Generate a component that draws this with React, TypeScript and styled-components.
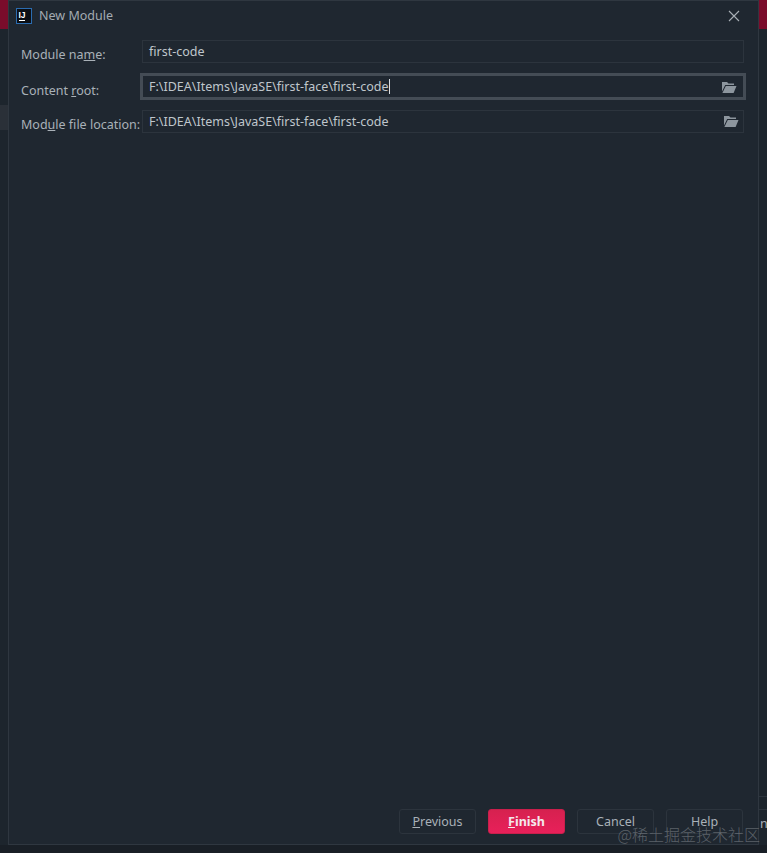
import styled, { createGlobalStyle } from "styled-components";

const GlobalStyle = createGlobalStyle`
  html, body {
    margin: 0;
    padding: 0;
    background: #191f26;
  }
  #root {
    height: 853px;
    overflow: hidden;
  }
`;

const Page = styled.div`
  position: relative;
  display: grid;
  grid-template-columns: 8px 751px 8px;
  height: 853px;
  font-family: "Noto Sans", "Open Sans", sans-serif;
  font-size: 12.5px;
  color: #bcc3c9;
`;

const SideStrip = styled.div`
  display: flex;
  flex-direction: column;
  height: 845px;
  overflow: hidden;
  background: #1d252d;
`;

const RedBlock = styled.div`
  height: 29px;
  flex: none;
  background: #7a0c2b;
`;

const Spacer = styled.div<{ $height?: number }>`
  flex: ${(p) => (p.$height ? "none" : "1")};
  height: ${(p) => (p.$height ? `${p.$height}px` : "auto")};
`;

const LightBlock = styled.div`
  height: 25px;
  flex: none;
  background: #2a3038;
`;

const StripLine = styled.div<{ $height: number }>`
  flex: none;
  height: ${(p) => p.$height}px;
  border-top: 1px solid #2d353e;
`;

const StripText = styled.div`
  flex: none;
  height: 36px;
  padding-top: 5px;
  box-sizing: border-box;
  border-top: 1px solid #2d353e;
  padding-left: 1px;
  white-space: nowrap;
  color: #a9b1b8;
`;

const Dialog = styled.div`
  display: flex;
  flex-direction: column;
  height: 845px;
  box-sizing: border-box;
  background: #1f2730;
  border: 1px solid #2f3740;
`;

const TitleBar = styled.div`
  display: flex;
  align-items: center;
  height: 29px;
  flex: none;
  padding: 0 18px 0 7px;
  gap: 7px;
`;

const TitleText = styled.span`
  flex: 1;
  color: #a3abb2;
  font-size: 12.5px;
`;

const CloseButton = styled.svg`
  width: 12px;
  height: 12px;
  stroke: #a9b0b6;
  stroke-width: 1.1;
  fill: none;
`;

const Form = styled.div`
  display: flex;
  flex-direction: column;
  flex: 1;
  gap: 9px;
  padding: 8px 14px 0 12px;
`;

const FormRow = styled.div`
  display: grid;
  grid-template-columns: 121px 1fr;
  align-items: center;
  height: 26px;
`;

const Label = styled.label`
  color: #a9b1b8;
  white-space: nowrap;
  padding-top: 7px;
`;

const Field = styled.div<{ $focused?: boolean }>`
  display: flex;
  align-items: center;
  justify-content: space-between;
  box-sizing: border-box;
  height: ${(p) => (p.$focused ? "27px" : "23px")};
  margin: ${(p) => (p.$focused ? "0 -2px" : "0")};
  padding: ${(p) => (p.$focused ? "0 5px 0 6px" : "0 3px 0 6px")};
  background: #1f2730;
  border: ${(p) => (p.$focused ? "3px solid #444c55" : "1px solid #2c343d")};
  color: #bfc6cc;
`;

const Caret = styled.span`
  display: inline-block;
  width: 1px;
  height: 15px;
  vertical-align: -3px;
  background: #d8dde1;
`;

const FolderIcon = styled.svg`
  width: 16px;
  height: 14px;
  fill: #8d969e;
  flex: none;
  margin-right: 1px;
`;

const Footer = styled.div`
  display: flex;
  justify-content: flex-end;
  gap: 12px;
  padding: 0 15px 10px 0;
`;

const Button = styled.button<{ $primary?: boolean }>`
  box-sizing: border-box;
  width: 77px;
  height: 25px;
  padding: 0;
  font: inherit;
  font-weight: ${(p) => (p.$primary ? 700 : 400)};
  color: ${(p) => (p.$primary ? "#f4e9ec" : "#a9b1b8")};
  background: ${(p) =>
    p.$primary ? "linear-gradient(#d6214f, #e8205a)" : "transparent"};
  border: 1px solid ${(p) => (p.$primary ? "#c91f4c" : "#2c343d")};
  border-radius: 3px;
`;

const Watermark = styled.div`
  position: absolute;
  right: 7px;
  bottom: 7px;
  font-family: "Noto Sans CJK SC", sans-serif;
  font-size: 16px;
  font-weight: 300;
  white-space: nowrap;
  color: rgba(150, 155, 160, 0.5);
`;

const Folder = () => (
  <FolderIcon viewBox="0 0 16 14">
    <path d="M1 2h5l1.5 1.5H13V5H4.2L1 11.5z" />
    <path d="M4.8 6H15.5L12.6 13H1.4z" />
  </FolderIcon>
);

const AppLogo = () => (
  <svg width="16" height="16" viewBox="0 0 16 16">
    <rect x="0.5" y="0.5" width="15" height="15" fill="#0c0f14" stroke="#2b6cb0" />
    <text x="2.5" y="9.5" fontSize="8.5" fontWeight="700" fontFamily="Liberation Sans" fill="#fff">
      IJ
    </text>
    <rect x="3" y="12" width="6" height="1" fill="#fff" />
  </svg>
);

const App = () => {
  return (
    <>
      <GlobalStyle />
      <Page>
        <SideStrip>
          <RedBlock />
          <Spacer $height={76} />
          <LightBlock />
        </SideStrip>
        <Dialog>
          <TitleBar>
            <AppLogo />
            <TitleText>New Module</TitleText>
            <CloseButton viewBox="0 0 12 12">
              <path d="M1 1l10 10M11 1L1 11" />
            </CloseButton>
          </TitleBar>
          <Form>
            <FormRow>
              <Label>
                Module na<u>m</u>e:
              </Label>
              <Field>first-code</Field>
            </FormRow>
            <FormRow>
              <Label>
                Content <u>r</u>oot:
              </Label>
              <Field $focused>
                <span>
                  F:\IDEA\Items\JavaSE\first-face\first-code
                  <Caret />
                </span>
                <Folder />
              </Field>
            </FormRow>
            <FormRow>
              <Label>
                Mod<u>u</u>le file location:
              </Label>
              <Field>
                <span>F:\IDEA\Items\JavaSE\first-face\first-code</span>
                <Folder />
              </Field>
            </FormRow>
          </Form>
          <Footer>
            <Button>
              <u>P</u>revious
            </Button>
            <Button $primary>
              <u>F</u>inish
            </Button>
            <Button>Cancel</Button>
            <Button>Help</Button>
          </Footer>
        </Dialog>
        <SideStrip>
          <RedBlock />
          <Spacer />
          <StripLine $height={12} />
          <StripText>nd</StripText>
        </SideStrip>
        <Watermark>@稀土掘金技术社区</Watermark>
      </Page>
    </>
  );
};

export default App;
